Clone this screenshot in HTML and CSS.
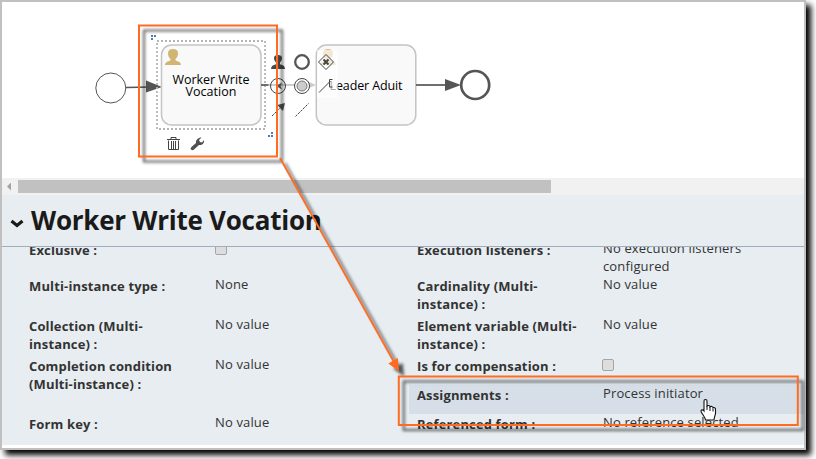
FILE: index.html
```html
<!DOCTYPE html>
<html lang="en">
<head>
<meta charset="utf-8">
<title>Process editor</title>
<link rel="stylesheet" href="styles.css">
</head>
<body>
<main class="window">
  <svg class="canvas" width="802" height="176" viewBox="2 2 802 176">
    <circle class="start" cx="110.8" cy="88" r="15"/>
    <path class="flow" d="M126 87.5 150 87"/>
    <path class="head" d="M146 80.5 162 87 146 92.500Z"/>
    <rect class="task" x="161.500" y="45" width="99.500" height="80" rx="10"/>
    <path class="person gold" d="M165 65c0-3 3-3.500 5.500-4.500v-1.500c-1.700-1.500-2.500-3.500-2.500-6 0-2.500 2-4 5-4s5 1.500 5 4c0 2.500-.8 4.500-2.500 6v1.500c2.500 1 5.500 1.500 5.500 4.500Z"/>
    <text class="node" x="172.500" y="84" textLength="77">Worker Write</text>
    <text class="node" x="185.500" y="96" textLength="51">Vocation</text>
    <rect class="selection" x="157" y="41" width="108" height="88"/>
    <path class="grip" d="M151 35h2v2h-2zM154 35h2v2h-2zM151 38h2v2h-2zM271 132h2v2h-2zM268 135h2v2h-2zM271 135h2v2h-2z"/>
    <path class="trash" d="M168.500 140.500v9h10v-9M167 139.500h13M171 139v-1.500h5v1.500M171.500 141v8M173.500 141v8M175.500 141v8"/>
    <path class="wrench" d="M191 149.500c-1-1 0-2 1-3l4-3.500c-.5-3 2-5.500 5.500-5.500l-2.500 2.500 1 2 2 .5 2-2.500c.5 3.500-2 5.500-5 5l-5 4.500c-1 1-2 1-3 0Z"/>
    <path class="flow" d="M261 85h8"/>
    <rect class="task" x="316.300" y="45" width="99.500" height="80" rx="10"/>
    <path class="person gold faint" d="M320 65c0-3 3-3.500 5.500-4.500v-1.500c-1.700-1.500-2.500-3.500-2.500-6 0-2.500 2-4 5-4s5 1.500 5 4c0 2.500-.8 4.500-2.500 6v1.500c2.500 1 5.500 1.500 5.500 4.500Z"/>
    <text class="node" x="329.500" y="90" textLength="73">Leader Aduit</text>
    <rect class="veil" x="317" y="50" width="21" height="48"/>
    <path class="flow pale" d="M268 85h40"/>
    <path class="head palehead" d="M307 81v8l9-4Z"/>
    <path class="flow" d="M416 85h31"/>
    <path class="head" d="M445 79 461 85 445 91Z"/>
    <circle class="end" cx="475.200" cy="85" r="14"/>
    <path class="person" d="M271 69c0-3 2-4 5-4.800v-1.700c-1.300-1.500-2-3-2-4.500 0-2 1.500-3 4-3s4 1 4 3c0 1.500-.7 3-2 4.500v1.700c3 .8 5 1.800 5 4.800Z"/>
    <circle class="ring" cx="302" cy="62" r="6.800"/>
    <path class="line" d="M318.500 62 326 54.500 333.500 62 326 69.500Z"/>
    <path class="cross" d="M323.500 59.500 328.500 64.500M328.500 59.500 323.500 64.500"/>
    <circle class="line" cx="278" cy="86" r="7.500"/>
    <path class="head" d="M276 86 282 82.500 280.500 86 282 89.500Z"/>
    <circle class="line inner" cx="302" cy="86" r="7.500"/>
    <circle class="line core" cx="302" cy="86" r="5"/>
    <path class="line" d="M319 92.500 330.500 81M332.500 79.500H329.500V87H332.500"/>
    <path class="line dash" d="M272 116 282 106"/>
    <path class="head" d="M285 103 283 111 277 105Z"/>
    <path class="line dash" d="M295.500 116.500 308.500 103.500"/>
  </svg>
  <div class="scrollbar"><span class="scroll-arrow"></span><span class="scroll-thumb"></span></div>
  <header class="heading">
    <svg class="chevron" width="14" height="10" viewBox="0 0 14 10"><path d="M1.500 2 7 6.500 12.500 2"/></svg>
    <h1>Worker Write Vocation</h1>
  </header>
  <section class="properties">
    <div class="column left">
      <div class="row exec"><b>Exclusive :</b><span><i class="checkbox"></i></span></div>
      <div class="row tall"><b>Multi-instance type :</b><span>None</span></div>
      <div class="row tall"><b>Collection (Multi-<br>instance) :</b><span>No value</span></div>
      <div class="row taller"><b>Completion condition<br>(Multi-instance) :</b><span>No value</span></div>
      <div class="row"><b>Form key :</b><span>No value</span></div>
    </div>
    <div class="column right">
      <div class="row exec"><b>Execution listeners :</b><span>No execution listeners<br>configured</span></div>
      <div class="row tall"><b>Cardinality (Multi-<br>instance) :</b><span>No value</span></div>
      <div class="row tall"><b>Element variable (Multi-<br>instance) :</b><span>No value</span></div>
      <div class="row"><b>Is for compensation :</b><span><i class="checkbox"></i></span></div>
      <div class="row active"><b>Assignments :</b><span>Process initiator</span></div>
      <div class="row"><b>Referenced form :</b><span>No reference selected</span></div>
    </div>
  </section>
</main>
<svg class="annotations" width="816" height="459" viewBox="0 0 816 459">
  <g class="callout">
    <rect x="139" y="25.500" width="138" height="131"/>
    <rect x="398.800" y="376.500" width="399" height="48.500"/>
    <path d="M280 158 394 362"/>
    <path class="tip" d="M398 369.500 390 363.500 397 359.500Z"/>
  </g>
  <path class="hand" d="M704 401c0-2 3-2 3 0v5c1-1 3-.5 3 .8 1-.8 3-.3 3 1 1-.6 2.500 0 2.500 1.500v4c0 2-1.500 4-1.500 6.700h-8.500c0-2-2-4-4-7.500-1.500-2.500 1-3.500 2.500-1.500Z"/>
  <path class="knuckles" d="M707 406v4M710 407v4M713 408.500v3"/>
</svg>
</body>
</html>
```
FILE: styles.css
```css
* { box-sizing: border-box; }
body {
  margin: 0;
  width: 816px;
  height: 459px;
  overflow: hidden;
  background: #fff;
  color: #333;
  font-family: "Open Sans", "Noto Sans", sans-serif;
}
.window {
  width: 806px;
  height: 450px;
  border: 2px solid #c0c0c0;
  background: #fff;
  box-shadow: 5px 5px 6px 0 #000;
}
.canvas { display: block; }
.start { fill: #fff; stroke: #555; stroke-width: 1; }
.end { fill: #fff; stroke: #555; stroke-width: 2.7; }
.flow { fill: none; stroke: #555; stroke-width: 1.7; }
.head { fill: #555; }
.pale { stroke: #bbb; }
.palehead { fill: #ccc; }
.task { fill: #f9f9f9; stroke: #c4c4c4; stroke-width: 1.5; }
.node { font-size: 12.5px; fill: #000; }
.selection { fill: none; stroke: #b5b5b5; stroke-width: 1.8; stroke-dasharray: 2 2; }
.grip { fill: #4a7ebb; }
.person { fill: #484848; }
.person.gold { fill: #d2b573; }
.person.faint { opacity: .85; }
.veil { fill: #fff; opacity: .65; }
.line { fill: none; stroke: #444; stroke-width: 1; }
.inner { fill: #fff; }
.core { fill: #ccc; stroke: #777; }
.ring { fill: #fff; stroke: #555; stroke-width: 2.3; }
.cross { stroke: #444; stroke-width: 2; }
.dash { stroke-dasharray: 2.5 1; }
.trash { fill: none; stroke: #444; stroke-width: 1; }
.wrench { fill: #505050; }
.scrollbar {
  display: flex;
  align-items: center;
  height: 17px;
  padding-left: 5px;
  background: #f1f1f1;
}
.scroll-arrow {
  width: 4px;
  height: 8px;
  margin-right: 7px;
  background: #a3a3a3;
  clip-path: polygon(0 50%, 100% 0, 100% 100%);
}
.scroll-thumb { width: 533px; height: 13px; background: #c1c1c1; }
.heading {
  display: flex;
  align-items: center;
  height: 52px;
  padding-left: 8px;
  border-bottom: 1px solid #a0adbd;
  background: #e7edf1;
}
.chevron { margin: 6px 7px 0 0; }
.chevron path { fill: none; stroke: #1a1a1a; stroke-width: 3.2; }
h1 {
  margin: -2px 0 0;
  color: #1a1a1a;
  font-size: 26px;
  font-weight: 700;
  line-height: 36px;
  letter-spacing: -.25px;
  white-space: nowrap;
}
.properties {
  display: flex;
  height: 198px;
  padding: 0 0 0 19px;
  overflow: hidden;
  background: #e7edf1;
  font-size: 13px;
  line-height: 18px;
}
.column { margin-top: -7px; }
.left { width: 388px; }
.right { width: 395px; }
.row {
  display: grid;
  grid-template-columns: 186px 1fr;
  height: 29px;
  padding-left: 8px;
  letter-spacing: .14px;
  white-space: nowrap;
}
.row b { padding-top: 1px; }
.row span { margin-top: -1px; }
.exec { height: 36px; }
.tall { height: 40px; }
.taller { height: 58px; }
.active { background: #d6dfe7; }
.checkbox {
  display: block;
  width: 12px;
  height: 12px;
  margin-top: 4px;
  border: 1px solid #a5a5a5;
  border-radius: 2px;
  background: #ddd;
}
.right .checkbox { margin-left: -1px; }
.annotations { position: absolute; inset: 0; }
.callout {
  fill: none;
  stroke: #ff6b21;
  stroke-width: 1.8;
  filter: drop-shadow(5px 5px 1.7px rgba(0, 0, 0, .65));
}
.callout rect { stroke-width: 2; }
.callout .tip { fill: #ff6b21; }
.hand { fill: #fff; stroke: #111; stroke-width: 1.1; }
.knuckles { fill: none; stroke: #111; stroke-width: 1; }
```
